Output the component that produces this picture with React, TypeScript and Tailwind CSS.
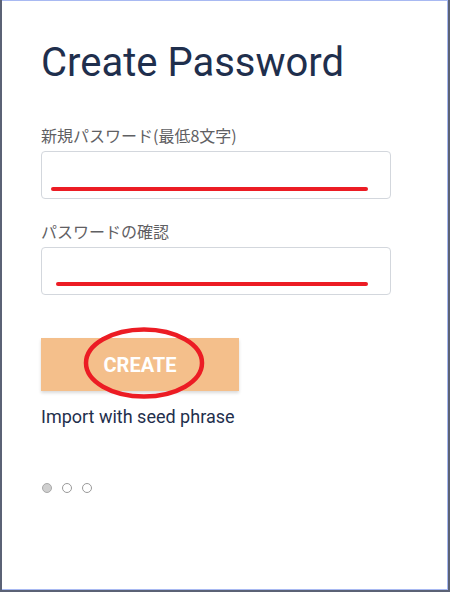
import React from 'react';

const fields = [
  { label: '新規パスワード(最低8文字)', mark: 'top-[35px] left-[9px] w-[317px]' },
  { label: 'パスワードの確認', mark: 'top-[34px] left-[14px] w-[312px]' },
];

const App = () => {
  return (
    <div className="w-[450px] h-[592px] border-l-2 border-r-2 border-b-2 border-[#5b6275]">
      <div
        className="h-full bg-white border-t border-r border-b border-[#a8b9f2] pl-[39px] pt-[38px]"
        style={{ fontFamily: 'Roboto, "Noto Sans CJK JP", sans-serif' }}
      >
        <h1 className="text-[40px] leading-[48px] text-[#1f2f4d] font-normal">Create Password</h1>

        <div className="mt-[36px] flex flex-col gap-5">
          {fields.map((field, idx) => (
            <div key={idx}>
              <label
                className="block text-[16px] leading-6 text-[#5f6063] mb-1"
                style={{ fontFamily: '"Noto Sans CJK JP", sans-serif' }}
              >
                {field.label}
              </label>
              <div className="relative w-[350px] h-12 rounded border border-[#d3d7dd] bg-white">
                {/* red annotation stroke */}
                <div className={`absolute h-[4px] rounded-full bg-[#ec1c24] ${field.mark}`}></div>
              </div>
            </div>
          ))}
        </div>

        <div className="relative mt-[43px] w-[198px]">
          <button className="w-[198px] h-[53px] bg-[#f4bf8b] text-white font-bold text-[20px] shadow-[0_2px_3px_rgba(0,0,0,0.15)]">
            CREATE
          </button>
          <svg className="absolute left-[42px] top-[-11px]" width="122" height="72" viewBox="0 0 122 72">
            <ellipse cx="61" cy="36" rx="58" ry="33.5" fill="none" stroke="#ec1c24" strokeWidth="4.5" />
          </svg>
        </div>

        <p className="mt-[14px] text-[18px] leading-6 text-[#1f2f4d]">Import with seed phrase</p>

        <div className="mt-[54px] flex gap-[10px] pl-[1px]">
          <span className="w-[10px] h-[10px] rounded-full bg-[#cfcfcf] border border-[#a9a9a9]"></span>
          <span className="w-[10px] h-[10px] rounded-full bg-white border border-[#9a9a9a]"></span>
          <span className="w-[10px] h-[10px] rounded-full bg-white border border-[#9a9a9a]"></span>
        </div>
      </div>
    </div>
  );
};

export default App;
